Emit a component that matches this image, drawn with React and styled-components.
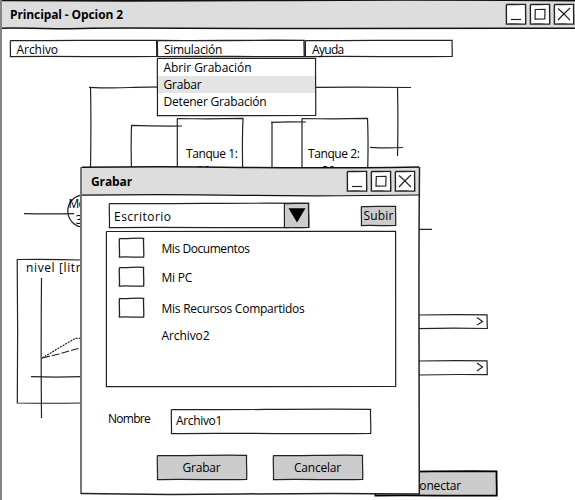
import React, { useLayoutEffect, useRef, useState } from 'react';
import styled, { createGlobalStyle } from 'styled-components';

const Global = createGlobalStyle`
  * { box-sizing: border-box; }
  body { margin: 0; background: #fff; }
`;

/* ---------- hand-drawn primitives ---------- */

const FrameSvg = styled.svg`
  position: absolute;
  left: 0;
  top: 0;
  width: 100%;
  height: 100%;
  overflow: visible;
  pointer-events: none;
`;

const edge = (x1, y1, x2, y2, bend) => {
  const dx = x2 - x1;
  const dy = y2 - y1;
  const len = Math.hypot(dx, dy) || 1;
  const nx = (-dy / len) * bend;
  const ny = (dx / len) * bend;
  return `C${x1 + dx * 0.3 + nx} ${y1 + dy * 0.3 + ny} ${x1 + dx * 0.65 - nx} ${y1 + dy * 0.65 - ny} ${x2} ${y2}`;
};

function Frame({ w, h, fill = 'none', stroke = '#222', sw = 1.2, bend = 0.8 }) {
  const d = [
    'M0.4 0.5',
    edge(0.4, 0.5, w - 0.4, 0.4, bend),
    edge(w - 0.4, 0.4, w - 0.3, h - 0.5, bend * 0.6),
    edge(w - 0.3, h - 0.5, 0.4, h - 0.4, -bend),
    edge(0.4, h - 0.4, 0.4, 0.5, bend * 0.6),
  ].join(' ');
  return (
    <FrameSvg>
      <path d={d} fill={fill} stroke={stroke} strokeWidth={sw} />
    </FrameSvg>
  );
}

const TextLine = styled.span`
  position: relative;
  display: inline-block;
  flex: none;
  font-family: 'Open Sans', 'Noto Sans', sans-serif;
  font-size: 12px;
  font-weight: ${(p) => (p.$bold ? 700 : 400)};
  line-height: 16px;
  color: #000;
  white-space: nowrap;
`;

/* Text whose tracking is adjusted so that the line takes up the given width. */
function Label({ w, children, ...rest }) {
  const ref = useRef(null);
  const [tracking, setTracking] = useState(0);
  useLayoutEffect(() => {
    const natural = ref.current.getBoundingClientRect().width;
    setTracking((w - natural) / children.length);
  }, []);
  return (
    <TextLine ref={ref} style={{ letterSpacing: `${tracking}px` }} {...rest}>
      {children}
    </TextLine>
  );
}

/* ---------- window ---------- */

const Screen = styled.main`
  position: relative;
  width: 575px;
  height: 500px;
  overflow: hidden;
  background: #fff;
  border-left: 2px solid #858585;
`;

const TitleBar = styled.header`
  position: relative;
  display: flex;
  align-items: flex-start;
  justify-content: space-between;
  height: 28px;
  padding: ${(p) => p.$pad};
  background: #ddd;
`;

const TitleText = styled.div`
  display: flex;
  padding-top: ${(p) => p.$top}px;
`;

const TitleRules = styled(FrameSvg)`
  path { fill: none; stroke: #111; }
`;

const Controls = styled.div`
  position: relative;
  display: flex;
  gap: 4px;
`;

const ControlButton = styled.button`
  position: relative;
  width: 20px;
  height: 20px;
  padding: 0;
  border: 0;
  background: #fff;
`;

const controlPaths = {
  min: 'M5 15.5 L15 15.5',
  max: 'M5.3 5.5 L15 5.3 L14.8 15 L5 15.2 Z',
  close: 'M4 4.5 Q10 9.5 16 16.2 M16 4 Q10 9.5 4 16',
};

function WindowControls() {
  return (
    <Controls>
      {['min', 'max', 'close'].map((k) => (
        <ControlButton key={k} aria-label={k}>
          <Frame w={20} h={20.5} bend={0.3} sw={1.4} />
          <FrameSvg>
            <path d={controlPaths[k]} fill="none" stroke="#222" strokeWidth="1.2" />
          </FrameSvg>
        </ControlButton>
      ))}
    </Controls>
  );
}

const MenuBar = styled.nav`
  display: flex;
  width: 444px;
  height: 17px;
  margin: 12px 0 0 7.5px;
`;

const MenuItem = styled.div`
  position: relative;
  width: ${(p) => p.$w}px;
  height: 17px;
  padding: 0 0 0 7px;
`;

const DropDown = styled.ul`
  position: absolute;
  left: 155px;
  top: 58px;
  width: 159px;
  height: 58px;
  margin: 0;
  padding: 1px 0 0;
  list-style: none;
  background: #fff;
`;

const DropItem = styled.li`
  display: flex;
  height: 17px;
  padding: 1px 0 0 6.5px;
  background: ${(p) => (p.$active ? '#e4e4e4' : 'transparent')};
`;

/* ---------- process diagram ---------- */

const Canvas = styled.div`
  position: absolute;
  inset: 0 0 0 -2px;
`;

const Drawing = styled.svg`
  position: absolute;
  inset: 0;
  width: 575px;
  height: 500px;
  fill: none;
  stroke: #222;
  stroke-width: 1.2;
`;

const Pin = styled.div`
  position: absolute;
  display: flex;
  left: ${(p) => p.$x}px;
  top: ${(p) => p.$y}px;
`;

const ConnectButton = styled.button`
  position: absolute;
  left: 375px;
  top: 471px;
  width: 122px;
  height: 25px;
  padding: 4px 0 0 37px;
  border: 0;
  background: #ccc;
  text-align: left;
`;

function Diagram() {
  return (
    <Canvas>
      <Drawing>
        <path d="M89 87.3 Q110 88.3 130 87.5 T200 87 L316 87.3 Q360 86.8 411 87.5" />
        <path d="M90.5 87 Q91.3 120 90.5 168" />
        <path d="M397.5 88 Q398.3 120 397.5 156 M370 147.3 Q386 148.5 403 147.5" />
        <path d="M131 125.3 Q155 126.3 182 126 M131.5 125 Q130.8 150 131.5 168" />
        <path d="M271 122.3 Q285 121.5 306 122 M272 122 L272 168" />
        <path d="M177 118.5 Q210 119.2 243 118.4 Q242 140 242.7 170 M177.3 118.5 V170" />
        <path d="M302 118.5 Q335 119.2 367.5 118.4 Q368.5 140 367.7 170 M302 118.5 V170" />
        <circle cx="84" cy="211" r="16.2" />
        <path d="M24 213.6 Q50 214.2 74 213.6 M419 229.3 L432 229.3" />
        <path d="M82 260 Q50 259 17.2 259.5 Q18 330 17.3 403 Q50 403.5 82 403" />
        <path d="M41.5 278 Q40.8 350 41.5 418 M31 376.7 Q55 377.5 82 376.7" />
        <path d="M42 358 L75 338.5 L82 338" strokeDasharray="2 1" />
        <path d="M42 358 L59 354 L76 349 L82 348.5" strokeDasharray="8 2" />
        <path d="M418 315 Q450 314.3 487 314.8 L487.3 328.5 Q450 327.8 418 328.6" />
        <path d="M418 361 Q450 360.3 487 360.8 L487.3 374.7 Q450 374.2 418 375" />
        <path d="M477 317.5 L482.5 321.5 L477 325 M477 363 L482.5 367 L477 371" />
      </Drawing>
      <Pin $x={186} $y={146}><Label w={51.5}>Tanque 1:</Label></Pin>
      <Pin $x={308} $y={146}><Label w={51.5}>Tanque 2:</Label></Pin>
      <Pin $x={197} $y={162.5}><Label w={13}>30</Label></Pin>
      <Pin $x={322} $y={162.5}><Label w={13}>30</Label></Pin>
      <Pin $x={68.5} $y={196}><Label w={30}>Motor</Label></Pin>
      <Pin $x={75.5} $y={212}><Label w={14}>30</Label></Pin>
      <Pin $x={26} $y={260}><Label w={74}>nivel [litros]</Label></Pin>
      <ConnectButton>
        <Frame w={122} h={25} sw={1.8} stroke="#000" bend={0.6} />
        <Label w={49}>Conectar</Label>
      </ConnectButton>
    </Canvas>
  );
}

/* ---------- save dialog ---------- */

const Dialog = styled.section`
  position: absolute;
  left: 78px;
  top: 167px;
  width: 339px;
  height: 327px;
  background: #fff;
  border-left: 2px solid #777;
`;

const Location = styled.div`
  display: flex;
  align-items: flex-start;
  padding: 8px 0 0 27px;
`;

const Combo = styled.div`
  position: relative;
  display: flex;
  justify-content: space-between;
  width: 200px;
  height: 25px;
  padding-left: 5px;
`;

const ComboValue = styled.div`
  position: relative;
  padding-top: 4px;
`;

const ComboArrow = styled.button`
  position: relative;
  width: 25px;
  height: 25px;
  padding: 0;
  border: 0;
  background: #ccc;
`;

const ActionButton = styled.button`
  position: relative;
  display: flex;
  justify-content: center;
  width: ${(p) => p.$w}px;
  height: ${(p) => p.$h}px;
  margin: ${(p) => p.$margin || 0};
  padding: ${(p) => p.$top}px 0 0;
  border: 0;
  background: #ccc;
`;

const FileList = styled.div`
  position: relative;
  width: 290px;
  height: 156px;
  margin: 3px 0 0 24px;
  padding: 7px 0 0 12.5px;
`;

const FileRow = styled.div`
  display: flex;
  align-items: flex-start;
  height: ${(p) => p.$h}px;
`;

const FileBox = styled.span`
  position: relative;
  width: 25px;
  height: 19.5px;
  margin-right: 18px;
`;

const FileName = styled.div`
  display: flex;
  padding: ${(p) => p.$top}px 0 0 ${(p) => p.$indent || 0}px;
`;

const NameRow = styled.label`
  display: flex;
  align-items: flex-start;
  padding: 22px 0 0 26px;
`;

const NameCaption = styled.span`
  display: flex;
  width: 63px;
  padding-top: 2px;
`;

const NameField = styled.span`
  position: relative;
  display: flex;
  width: 200px;
  height: 25px;
  padding: 4px 0 0 5px;
`;

const Actions = styled.footer`
  display: flex;
  gap: 26px;
  padding: 21px 0 0 74.5px;
`;

const files = [
  { name: 'Mis Documentos', w: 88, h: 29, top: 3 },
  { name: 'Mi PC', w: 30.5, h: 31, top: 3 },
  { name: 'Mis Recursos Compartidos', w: 143, h: 29, top: 3 },
];

function SaveDialog() {
  return (
    <Dialog>
      <TitleBar $pad="4px 4px 0 9px">
        <TitleText $top={3}><Label w={41} $bold>Grabar</Label></TitleText>
        <WindowControls />
        <TitleRules>
          <path d="M0 0.3 Q80 -0.7 160 0.4 T337 0" strokeWidth="1.5" />
          <path d="M0 28.2 Q80 27.2 160 28.3 T337 28" strokeWidth="1.2" />
        </TitleRules>
      </TitleBar>
      <Location>
        <Combo>
          <ComboValue><Label w={57.5}>Escritorio</Label></ComboValue>
          <ComboArrow aria-label="Abrir">
            <Frame w={25} h={25} bend={0.3} />
            <FrameSvg><path d="M4.5 5.3 L21.5 5.3 L13 19.5 Z" fill="#000" /></FrameSvg>
          </ComboArrow>
          <Frame w={200} h={25} />
        </Combo>
        <ActionButton $w={35} $h={20} $top={2} $margin="3px 0 0 52px">
          <Frame w={35} h={20} bend={0.5} />
          <Label w={30}>Subir</Label>
        </ActionButton>
      </Location>
      <FileList>
        <Frame w={290} h={156} />
        {files.map((f) => (
          <FileRow key={f.name} $h={f.h}>
            <FileBox><Frame w={25} h={19.5} bend={0.8} sw={1.3} /></FileBox>
            <FileName $top={f.top}><Label w={f.w}>{f.name}</Label></FileName>
          </FileRow>
        ))}
        <FileName $indent={43} $top={1}><Label w={48}>Archivo2</Label></FileName>
      </FileList>
      <NameRow>
        <NameCaption><Label w={42}>Nombre</Label></NameCaption>
        <NameField>
          <Frame w={200} h={25} />
          <Label w={46}>Archivo1</Label>
        </NameField>
      </NameRow>
      <Actions>
        <ActionButton $w={90} $h={25} $top={5}>
          <Frame w={90} h={25} />
          <Label w={38}>Grabar</Label>
        </ActionButton>
        <ActionButton $w={90} $h={25} $top={5}>
          <Frame w={90} h={25} />
          <Label w={47}>Cancelar</Label>
        </ActionButton>
      </Actions>
      <FrameSvg>
        <path
          d="M337.5 0 Q336.8 80 337 160 T337.3 327 Q250 326 160 327 T-1 326.6"
          fill="none"
          stroke="#222"
          strokeWidth="1.5"
        />
      </FrameSvg>
    </Dialog>
  );
}

const menuOptions = [
  { text: 'Abrir Grabación', w: 88 },
  { text: 'Grabar', w: 38, active: true },
  { text: 'Detener Grabación', w: 103 },
];

export default function App() {
  return (
    <>
      <Global />
      <Screen>
        <TitleBar $pad="4px 1px 0 8px">
          <TitleText $top={3}><Label w={113} $bold>Principal - Opcion 2</Label></TitleText>
          <WindowControls />
          <TitleRules>
            <path d="M-2 0.5 Q140 1.5 280 0.3 T573 0.7" strokeWidth="1.7" />
            <path d="M-2 28.2 Q10 27.7 30 28.3 T80 28.4 T180 28.3 T330 28.5 T573 28.3" strokeWidth="1.5" />
          </TitleRules>
        </TitleBar>
        <MenuBar>
          <MenuItem $w={147.5}>
            <Frame w={147} h={17} bend={0.5} />
            <Label w={41.5}>Archivo</Label>
          </MenuItem>
          <MenuItem $w={148}>
            <Frame w={147.5} h={17} bend={0.5} sw={1.4} />
            <Label w={58}>Simulación</Label>
          </MenuItem>
          <MenuItem $w={147.5}>
            <Frame w={147.5} h={17} bend={0.5} />
            <Label w={31.5}>Ayuda</Label>
          </MenuItem>
        </MenuBar>
        <Diagram />
        <DropDown>
          {menuOptions.map((o) => (
            <DropItem key={o.text} $active={o.active}>
              <Label w={o.w}>{o.text}</Label>
            </DropItem>
          ))}
          <Frame w={159} h={58} bend={0.5} />
        </DropDown>
        <SaveDialog />
      </Screen>
    </>
  );
}
